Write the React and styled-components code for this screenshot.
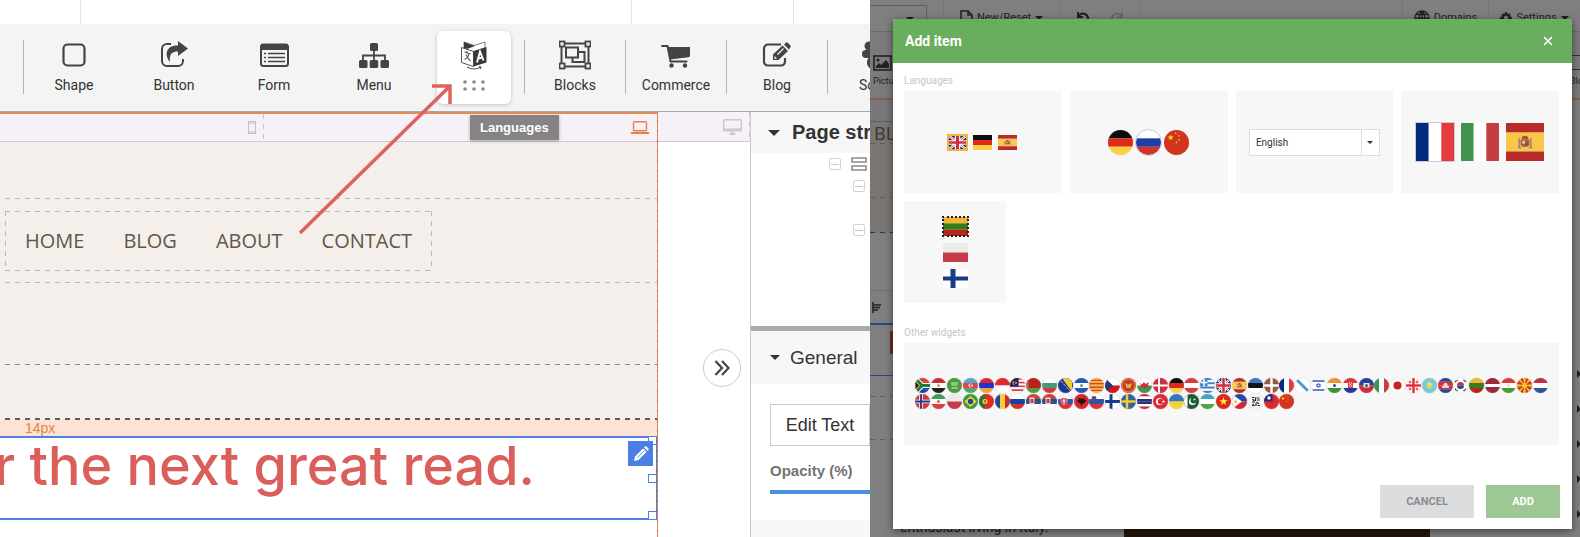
import { useState } from "react";
import styled, { createGlobalStyle, css } from "styled-components";

const GlobalStyle = createGlobalStyle`
  * {
    box-sizing: border-box;
  }
  body {
    margin: 0;
    background: #fff;
    font-family: Roboto, "Liberation Sans", sans-serif;
    color: #3c3c3c;
  }
  button, select, input {
    font-family: inherit;
    margin: 0;
  }
  svg {
    display: block;
  }
`;

//Flags, all drawn on a 30x30 field
const STAR = "M0,-5 1.2,-1.6 4.8,-1.5 1.9,.6 2.9,4 0,2 -2.9,4 -1.9,.6 -4.8,-1.5 -1.2,-1.6Z";

const Star = ({ x = 15, y = 15, s = 1, fill = "#ffde00" }) => (
  <path d={STAR} fill={fill} transform={`translate(${x} ${y}) scale(${s})`} />
);
const Dot = ({ x = 15, y = 15, r = 4, fill }) => (
  <circle cx={x} cy={y} r={r} fill={fill} />
);
const Box = ({ x = 0, y = 0, w = 30, h = 30, fill }) => (
  <rect x={x} y={y} width={w} height={h} fill={fill} />
);
const Cross = ({ x = 12, w = 5, fill }) => (
  <path d={`M${x},0V30M0,15H30`} stroke={fill} strokeWidth={w} fill="none" />
);

const union = (
  <>
    <Box fill="#012169" />
    <path d="M0,0 30,30M30,0 0,30" stroke="#fff" strokeWidth="4.6" />
    <path d="M0,0 30,30M30,0 0,30" stroke="#d22f3a" strokeWidth="1.4" />
    <Cross x={15} w={9} fill="#fff" />
    <Cross x={15} w={5} fill="#d22f3a" />
  </>
);

const FLAGS = {
  za: {
    h: ["#de3831", "#de3831", "#2240a0", "#2240a0"],
    over: (
      <>
        <path d="M0,0 14,15 0,30M14,15H30" stroke="#fff" strokeWidth="10" fill="none" />
        <path d="M0,0 14,15 0,30M14,15H30" stroke="#12803c" strokeWidth="6" fill="none" />
        <path d="M0,5 9,15 0,25Z" fill="#222" stroke="#ffb612" strokeWidth="2" />
      </>
    ),
  },
  eg: { h: ["#ce2b37", "#fff", "#222"], over: <Dot r={3} fill="#c9a03c" /> },
  sa: {
    h: ["#4d9b3b"],
    over: <path d="M8,10H22M9,14H21M9,20H22" stroke="#dcebd8" strokeWidth="2.4" />,
  },
  az: {
    h: ["#4fa8cf", "#e0444f", "#5aa56a"],
    over: (
      <>
        <Dot r={4} fill="#fff" />
        <Dot x={16} r={3} fill="#e0444f" />
        <Star x={18} s={0.5} fill="#fff" />
      </>
    ),
  },
  am: { h: ["#e0282f", "#2331d0", "#f0a23c"] },
  id: { h: ["#e0282f", "#fff"] },
  my: {
    h: ["#d9414e", "#fff", "#d9414e", "#fff", "#d9414e", "#fff", "#d9414e", "#fff"],
    over: (
      <>
        <Box w={17} h={17} fill="#1c2163" />
        <Dot x={9} y={10} r={4} fill="#ffcc00" />
        <Dot x={11} y={10} r={4} fill="#1c2163" />
        <Star x={12} y={10} s={0.6} />
      </>
    ),
  },
  by: { h: ["#b8241d", "#b8241d", "#4d9b3b"], over: <Box w={5} fill="#cf6a60" /> },
  bg: { h: ["#fff", "#4a9a7a", "#d8392f"] },
  ba: {
    h: ["#1f3592"],
    over: (
      <>
        <path d="M8,0H28V28Z" fill="#f4cb2e" />
        <path d="M3,3 27,29" stroke="#fff" strokeWidth="2" strokeDasharray="2 2" />
      </>
    ),
  },
  sv: { h: ["#2356b4", "#fff", "#2356b4"], over: <Dot r={3} fill="#6a9a7c" /> },
  ct: {
    h: ["#f3bb30", "#d8452c", "#f3bb30", "#d8452c", "#f3bb30", "#d8452c", "#f3bb30", "#d8452c", "#f3bb30"],
  },
  cz: { h: ["#fff", "#d7141a"], over: <path d="M0,0 16,15 0,30Z" fill="#1d3c7c" /> },
  me: {
    h: ["#c8372c"],
    over: (
      <>
        <circle cx="15" cy="15" r="13" fill="none" stroke="#d8a63c" strokeWidth="2" />
        <path d="M8,10 15,13 22,10 19,20H11Z" fill="#dfae3c" />
      </>
    ),
  },
  wl: {
    h: ["#fff", "#3c9a4c"],
    over: <path d="M5,10 10,13 14,8 17,12 24,8 22,14 25,20 19,18 16,22 13,18 7,22 9,16Z" fill="#c8313e" />,
  },
  dk: { h: ["#cf2e46"], over: <Cross w={4} fill="#fff" /> },
  de: { h: ["#0c0c0c", "#dd2a1b", "#fdcf42"] },
  at: { h: ["#dc3a3f", "#fff", "#dc3a3f"] },
  gr: {
    h: ["#3f82c8", "#fff", "#3f82c8", "#fff", "#3f82c8", "#fff", "#3f82c8"],
    over: (
      <>
        <Box w={15} h={17} fill="#3f82c8" />
        <path d="M8,0V17M0,9H15" stroke="#fff" strokeWidth="3" />
      </>
    ),
  },
  gb: { h: ["#012169"], over: union },
  es: {
    h: ["#b92a2b", "#f8c748", "#f8c748", "#b92a2b"],
    over: (
      <>
        <path d="M11.500,13H18.500V17.500Q15,20.500 11.500,17.500Z" fill="#b5583c" />
        <path d="M12.500,11Q15,9 17.500,11V13H12.500Z" fill="#96602c" />
        <path d="M10.400,12V19M19.600,12V19" stroke="#9b7f78" strokeWidth="1.2" />
        <path d="M9.500,19.500H12M18,19.500H20.500" stroke="#7a7f9a" strokeWidth="1" />
        <Box x={13} y={14} w={2} h={2.4} fill="#e7c9b0" />
        <Dot x={16.5} y={16.5} r={1.1} fill="#6b4a80" />
      </>
    ),
  },
  ee: { h: ["#3878c8", "#151515", "#fff"] },
  eu: {
    h: ["#cf3b3a"],
    over: (
      <>
        <path d="M0,0 30,30M30,0 0,30" stroke="#3c8c46" strokeWidth="4" />
        <Cross x={15} w={5} fill="#fff" />
      </>
    ),
  },
  fr: { v: ["#042a80", "#fff", "#e53a3f"] },
  gl: { h: ["#fff"], over: <path d="M3,3 27,27" stroke="#46a0cc" strokeWidth="6" /> },
  il: {
    h: ["#fff"],
    over: (
      <>
        <path d="M0,6H30M0,24H30" stroke="#3455c8" strokeWidth="3" />
        <path d="M15,10 19,17H11ZM15,20 11,13H19Z" fill="none" stroke="#3455c8" strokeWidth="1.4" />
      </>
    ),
  },
  in: { h: ["#ef9234", "#fff", "#3d9438"], over: <Dot r={3} fill="#38489c" /> },
  hr: {
    h: ["#e0363a", "#fff", "#22399b"],
    over: (
      <>
        <Box x={10} y={8} w={10} h={12} fill="#e0464a" />
        <path d="M12,9H14V11H12ZM16,9H18V11H16ZM14,12H16V14H14ZM12,15H14V17H12ZM16,15H18V17H16Z" fill="#fff" />
      </>
    ),
  },
  ht: {
    h: ["#24409c", "#cf2a3e"],
    over: (
      <>
        <Box x={9} y={10} w={12} h={9} fill="#e6e6e6" />
        <Dot r={3} fill="#3f6b58" />
      </>
    ),
  },
  it: { v: ["#43924e", "#fff", "#c33d41"] },
  jp: { h: ["#fff"], over: <Dot r={8} fill="#cf2020" /> },
  ge: {
    h: ["#fff"],
    over: (
      <>
        <Cross x={15} w={5} fill="#e0343a" />
        <path d="M8,5V11M5,8H11M22,5V11M19,8H25M8,19V25M5,22H11M22,19V25M19,22H25" stroke="#e0343a" strokeWidth="2" />
      </>
    ),
  },
  kz: {
    h: ["#76cbd8"],
    over: (
      <>
        <Dot y={13} r={5} fill="#f2df4c" />
        <path d="M7,17Q15,26 23,17Q15,21 7,17Z" fill="#f2df4c" />
      </>
    ),
  },
  kh: {
    h: ["#2c4496", "#d0323c", "#d0323c", "#2c4496"],
    over: <path d="M8,20V16H11V12L15,9 19,12V16H22V20Z" fill="#e6d6dc" />,
  },
  kr: {
    h: ["#fff"],
    over: (
      <>
        <path d="M8,15A7,7 0 0 1 22,15Z" fill="#cc2c3a" />
        <path d="M8,15A7,7 0 0 0 22,15Z" fill="#1f4a8c" />
        <path d="M4,8 9,4M21,4 26,8M4,22 9,26M21,26 26,22" stroke="#333" strokeWidth="3" strokeDasharray="3 1" />
      </>
    ),
  },
  lt: { h: ["#f2b632", "#397a1f", "#b4271c"] },
  lv: { h: ["#9c2b38", "#9c2b38", "#fff", "#9c2b38", "#9c2b38"] },
  tj: { h: ["#dc3a3a", "#fff", "#4a9a3a"], over: <Dot r={2} fill="#e8b53c" /> },
  mk: {
    h: ["#d23a22"],
    over: (
      <>
        <path d="M15,15 12,0H18ZM15,15 12,30H18ZM15,15 0,12V18ZM15,15 30,12V18ZM15,15 2,4 6,1ZM15,15 28,4 24,1ZM15,15 2,26 6,29ZM15,15 28,26 24,29Z" fill="#f4c832" />
        <Dot r={5} fill="#f4c832" />
      </>
    ),
  },
  nl: { h: ["#c02f3c", "#fff", "#2c55a4"] },
  no: {
    h: ["#d03a3e"],
    over: (
      <>
        <Cross w={7} fill="#fff" />
        <Cross w={3.6} fill="#1f3474" />
      </>
    ),
  },
  ir: { h: ["#3f9b5e", "#fff", "#d8403c"], over: <Dot r={3} fill="#d8605c" /> },
  pl: { h: ["#ebebea", "#c93a48"] },
  br: {
    h: ["#3c9a44"],
    over: (
      <>
        <path d="M15,4 27,15 15,26 3,15Z" fill="#f4d62c" />
        <Dot r={5.4} fill="#27449a" />
      </>
    ),
  },
  pt: {
    h: ["#e02d22"],
    over: (
      <>
        <Box w={12} fill="#23793a" />
        <Dot x={12} r={5} fill="#f2cf2c" />
        <Box x={10} y={12} w={4} h={5} fill="#d8504a" />
      </>
    ),
  },
  ro: { v: ["#26479e", "#f6d232", "#cd2c38"] },
  ru: { h: ["#fff", "#1b3ea8", "#cf3427"] },
  rs: {
    h: ["#c8433f", "#2d4d86", "#fff"],
    over: (
      <>
        <Box x={7} y={7} w={10} h={14} fill="#e9d9d6" />
        <Box x={9} y={10} w={6} h={8} fill="#c8433f" />
      </>
    ),
  },
  sk: {
    h: ["#f4f4f4", "#2a55a8", "#dc3136"],
    over: (
      <>
        <path d="M6,8H18V17Q12,25 6,17Z" fill="#dc3136" stroke="#fff" />
        <path d="M12,10V19M9,14H15" stroke="#fff" strokeWidth="2" />
      </>
    ),
  },
  al: {
    h: ["#d8282c"],
    over: <path d="M9,7 14,10 15,8 16,10 21,7 20,12 25,11 21,18 17,19 15,25 13,19 9,18 5,11 10,12Z" fill="#2a1212" />,
  },
  si: {
    h: ["#fff", "#2a55a8", "#dc3136"],
    over: <path d="M6,5H14V11Q10,17 6,11Z" fill="#2a55a8" stroke="#dc3136" />,
  },
  fi: { h: ["#fff"], over: <Cross w={6} fill="#183c8a" /> },
  se: { h: ["#2d65a0"], over: <Cross w={5} fill="#f3c92d" /> },
  th: { h: ["#cc2c42", "#fff", "#2a2f78", "#2a2f78", "#fff", "#cc2c42"] },
  tr: {
    h: ["#dc2a36"],
    over: (
      <>
        <Dot x={13} r={7} fill="#fff" />
        <Dot x={15} r={5.4} fill="#dc2a36" />
        <Star x={21} s={0.7} fill="#fff" />
      </>
    ),
  },
  ua: { h: ["#3376c4", "#f4d232"] },
  pk: {
    h: ["#1f5c32"],
    over: (
      <>
        <Box w={7} fill="#fff" />
        <Dot x={17} r={7} fill="#fff" />
        <Dot x={19} y={13} r={6} fill="#1f5c32" />
        <Star x={21} y={11} s={0.6} fill="#fff" />
      </>
    ),
  },
  uz: { h: ["#3fa6c0", "#fff", "#4ca648"] },
  vn: { h: ["#dc2a22"], over: <Star s={1.8} fill="#ffe43c" /> },
  ph: {
    h: ["#2648a4", "#cc2a38"],
    over: (
      <>
        <path d="M0,0 20,15 0,30Z" fill="#fff" />
        <Dot x={7} r={3} fill="#f2c62c" />
      </>
    ),
  },
  km: {
    h: ["#f6f6f6"],
    over: (
      <path
        d="M8,7H13M17,8H23M9,10 13,14M15,7V14M18,12H24M8,16H14M17,16 22,20M9,20 13,24M16,18V24M19,23H24M8,23H10"
        stroke="#2a2a2a"
        strokeWidth="2.4"
      />
    ),
  },
  tw: {
    h: ["#de2a24"],
    over: (
      <>
        <Box w={17} h={15} fill="#1c2c90" />
        <Dot x={10} y={8} r={3.4} fill="#fff" />
      </>
    ),
  },
  cn: {
    h: ["#d23420"],
    over: (
      <>
        <Star x={8} y={9} s={0.8} />
        <Star x={14} y={4} s={0.3} />
        <Star x={18} y={7} s={0.3} />
        <Star x={18} y={12} s={0.3} />
        <Star x={15} y={15} s={0.3} />
      </>
    ),
  },
};

const ROUND_ROWS =
  "za eg sa az am id my by bg ba sv ct cz me wl dk de at gr gb es ee eu fr gl il in hr ht it jp ge kz kh kr lt lv tj mk nl " +
  "no ir pl br pt ro ru rs rs sk al si fi se th tr ua pk uz vn ph km tw cn";

const Flag = ({ code, ...rest }) => {
  const { h, v, over } = FLAGS[code];
  const stripes = h || v;
  const size = 30 / stripes.length;
  return (
    <FlagSvg viewBox="0 0 30 30" preserveAspectRatio="none" aria-hidden="true" {...rest}>
      {stripes.map((fill, i) =>
        h ? (
          <rect key={i} y={i * size} width="30" height={size + 0.1} fill={fill} />
        ) : (
          <rect key={i} x={i * size} width={size + 0.1} height="30" fill={fill} />
        )
      )}
      {over}
    </FlagSvg>
  );
};

//Toolbar icons, 32x32
const icons = {
  shape: <rect x="5.5" y="5.5" width="21" height="21" rx="4" fill="none" stroke="#444" strokeWidth="2.2" />,
  button: (
    <>
      <path d="M13,5H9A5,5 0 0 0 4,10V22A5,5 0 0 0 9,27H20A5,5 0 0 0 25,22V20" fill="none" stroke="#444" strokeWidth="2" />
      <path d="M20,2 30,9.500 20,17V12.500C14,12.500 11,15 12,23C6,16 8,6 20,6.500Z" fill="#444" />
    </>
  ),
  form: (
    <>
      <rect x="3" y="5.500" width="27" height="21.500" rx="2.500" fill="none" stroke="#444" strokeWidth="2" />
      <path d="M3,5H30V11H3Z" fill="#444" />
      <path d="M10,14.500H27M10,18.500H27M10,22.500H27" stroke="#444" strokeWidth="1.600" />
      <path d="M6,14.500H8M6,18.500H8M6,22.500H8" stroke="#444" strokeWidth="1.600" />
    </>
  ),
  menu: (
    <>
      <rect x="12" y="4" width="8" height="8" rx="1.500" fill="#444" />
      <rect x="1" y="21" width="8.500" height="8" rx="1.500" fill="#444" />
      <rect x="11.700" y="21" width="8.500" height="8" rx="1.500" fill="#444" />
      <rect x="22.500" y="21" width="8.500" height="8" rx="1.500" fill="#444" />
      <path d="M16,12V21M5,21V16.500H27V21" fill="none" stroke="#444" strokeWidth="1.800" />
    </>
  ),
  languages: (
    <>
      <path d="M6,3 16,6.500 27,3V9L15,13 6,9Z" fill="#fff" stroke="#555" strokeWidth=".8" />
      <path d="M6,3 17,7 9,10 6,9Z" fill="#3a3a3a" />
      <path d="M3.500,8.500 15.500,12.500V27.500L3.500,23.500Z" fill="#fff" stroke="#555" />
      <path d="M15.500,12 28.500,8V23.500L15.500,27.500Z" fill="#3a3a3a" />
      <path d="M19,23.500 22,12.500 25.500,21.500M20,19.500 24.500,18.500" fill="none" stroke="#fff" strokeWidth="1.900" />
      <path d="M6.500,13 12.500,15M11,14.500Q10,19 6.500,20.500M8,15.500Q10,20 12.500,22M9,12V14" fill="none" stroke="#555" strokeWidth="1.100" />
      <path d="M9,28Q16,32 23,28M23,28 21,27.500M23,28 22.500,30" fill="none" stroke="#555" strokeWidth="1.100" />
    </>
  ),
  blocks: (
    <>
      <rect x="2.500" y="4.500" width="27" height="23" fill="none" stroke="#444" strokeWidth="2" />
      <rect x="13.500" y="13" width="12" height="10" fill="#f4f4f4" stroke="#444" strokeWidth="2" />
      <rect x="7" y="8.500" width="12" height="10" fill="#f4f4f4" stroke="#444" strokeWidth="2" />
      {[[0.500, 2.500], [26.500, 2.500], [0.500, 24.500], [26.500, 24.500]].map(([x, y]) => (
        <rect key={x + "-" + y} x={x} y={y} width="5" height="5" fill="#f4f4f4" stroke="#444" strokeWidth="1.800" />
      ))}
    </>
  ),
  commerce: (
    <>
      <path d="M2,7H7.500L10.500,22.500H26.500" fill="none" stroke="#444" strokeWidth="2" strokeLinecap="round" />
      <path d="M8,8H30V16.500Q30,18 28.500,18.300L10,20.500Z" fill="#444" />
      <circle cx="11.500" cy="26.500" r="2.200" fill="#444" />
      <circle cx="25" cy="26.500" r="2.200" fill="#444" />
    </>
  ),
  blog: (
    <>
      <path d="M20,5.500H7A4,4 0 0 0 3,9.500V22A4,4 0 0 0 7,26.500H20A4,4 0 0 0 24,22V19" fill="none" stroke="#444" strokeWidth="2.200" />
      <path d="M12,21V15.500L21.500,6.500 27,12 17.500,21Z" fill="#444" />
      <path d="M23,5.500 25,3.500Q26,3 27,4L29.500,6.500Q30,7.500 29.300,8.500L28,10.500Z" fill="#444" />
      <path d="M13.500,17 16,19.500 13.500,20Z" fill="#f4f4f4" />
      <path d="M16.500,15.500 22.500,9.500" stroke="#f4f4f4" strokeWidth="1.200" />
    </>
  ),
  social: (
    <g fill="#444">
      <circle cx="7" cy="7" r="4.500" />
      <rect x="0" y="11" width="11" height="8" rx="4" />
      <circle cx="17" cy="11" r="6" />
      <rect x="5" y="17" width="24" height="13" rx="6" />
    </g>
  ),
};

const TOOLS = [
  ["shape", "Shape"],
  ["button", "Button"],
  ["form", "Form"],
  ["menu", "Menu"],
  ["languages", "Languages"],
  ["blocks", "Blocks"],
  ["commerce", "Commerce"],
  ["blog", "Blog"],
  ["social", "Social"],
];
const DIVIDED = ["shape", "blocks", "commerce", "blog", "social"];

const Tool = ({ id, label }) => {
  const active = id === "languages";
  return (
    <ToolSlot $divided={DIVIDED.includes(id)}>
      <ToolButton type="button" $active={active} aria-label={label}>
        <svg width="32" height="32" viewBox="0 0 32 32">
          {icons[id]}
        </svg>
        {active ? (
          <Grip width="22" height="14" viewBox="0 0 22 14">
            {[2, 11, 20].map((x) =>
              [3, 10].map((y) => <circle key={x + "-" + y} cx={x} cy={y} r="1.800" fill="#8a8a8a" />)
            )}
          </Grip>
        ) : (
          <ToolLabel>{label}</ToolLabel>
        )}
      </ToolButton>
      {active && <Tooltip>{label}</Tooltip>}
    </ToolSlot>
  );
};

const Editor = () => (
  <EditorPane>
    <TabStrip>
      <TabCell $grow={80} />
      <TabCell $grow={552} />
      <TabCell $grow={162} />
      <TabCell $grow={76} $last />
    </TabStrip>
    <Toolbar>
      {TOOLS.map(([id, label]) => (
        <Tool key={id} id={id} label={label} />
      ))}
    </Toolbar>
    <Workspace>
      <Canvas>
        <Ruler $active>
          <PhoneMark>
            <svg width="8" height="13" viewBox="0 0 8 13">
              <rect x=".5" y=".5" width="7" height="12" fill="none" stroke="#c4c0c4" />
              <path d="M0,2H8M0,11H8" stroke="#c4c0c4" />
            </svg>
          </PhoneMark>
          <svg width="18" height="13" viewBox="0 0 18 13">
            <rect x="2.500" y=".7" width="13" height="9" rx="1" fill="none" stroke="#e8814d" strokeWidth="1.400" />
            <path d="M0,12H18" stroke="#e8814d" strokeWidth="2" />
          </svg>
        </Ruler>
        <Band $height={57} />
        <NavBand>
          <SiteNav>
            <a href="#home">HOME</a>
            <a href="#blog">BLOG</a>
            <a href="#about">ABOUT</a>
            <a href="#contact">CONTACT</a>
          </SiteNav>
        </NavBand>
        <Band $height={82} $color="#8f8b87" />
        <Band $height={55} $color="#5f5b58" $thick />
        <Spacing>14px</Spacing>
        <Selection>
          <Headline>for the next great read.</Headline>
          <EditBadge type="button" aria-label="Edit">
            <svg width="16" height="16" viewBox="0 0 16 16">
              <path d="M1,15 2,10.500 10,2.500 13.500,6 5.500,14Z" fill="#fff" />
              <path d="M11,1.500 12,.5Q13,0 14,1L15,2Q16,3 15.500,4L14.500,5Z" fill="#fff" />
              <path d="M4.500,11.500 11,5" stroke="#4a80e4" strokeWidth=".8" />
            </svg>
          </EditBadge>
          <Handle $at="0%" />
          <Handle $at="50%" />
          <Handle $at="100%" />
        </Selection>
      </Canvas>
      <CanvasEdge />
      <Gutter>
        <Ruler $dashed>
          <svg width="19" height="16" viewBox="0 0 19 16">
            <rect x=".7" y=".7" width="17.600" height="11" rx="1" fill="none" stroke="#cbc8cb" strokeWidth="1.400" />
            <path d="M1,10.500H18M9.500,11V15M6.500,15H12.500" stroke="#cbc8cb" strokeWidth="2" />
          </svg>
        </Ruler>
        <Collapse type="button" aria-label="Collapse panel">
          <svg width="16" height="16" viewBox="0 0 16 16">
            <path d="M1.500,1 8,8 1.500,15M8,1 14.500,8 8,15" fill="none" stroke="#444" strokeWidth="2.200" />
          </svg>
        </Collapse>
      </Gutter>
      <Sidebar>
        <PanelHead $bold>
          <Caret $size={6} />
          <span>Page structure</span>
        </PanelHead>
        <Tree>
          <TreeRow $indent={78}>
            <Toggle />
            <svg width="16" height="14" viewBox="0 0 16 14">
              <path d="M1,1H15V5H1ZM1,9H15V13H1Z" fill="none" stroke="#8a8a8a" strokeWidth="1.600" />
            </svg>
          </TreeRow>
          <TreeRow $indent={102}>
            <Toggle />
          </TreeRow>
          <TreeRow $indent={102} />
          <TreeRow $indent={102}>
            <Toggle />
          </TreeRow>
        </Tree>
        <PanelHead $tall>
          <Caret $size={5} />
          <span>General</span>
        </PanelHead>
        <Properties>
          <EditText type="button">Edit Text</EditText>
          <label htmlFor="opacity">Opacity (%)</label>
          <Range id="opacity" type="range" defaultValue="100" />
        </Properties>
        <SidebarFoot />
      </Sidebar>
    </Workspace>
    <Arrow width="170" height="160" viewBox="0 0 170 160">
      <path d="M10,153 159,7M142,6H160V24" fill="none" stroke="#de625e" strokeWidth="3.500" />
    </Arrow>
  </EditorPane>
);

//The dimmed editor that sits behind the dialog
const Backdrop = () => (
  <Dimmed>
    <DimTop>
      <DimSelect>
        <Caret $size={4} $dark />
      </DimSelect>
      <DimItem $width={116}>
        <svg width="13" height="16" viewBox="0 0 13 16">
          <path d="M1,1H8L12,5V15H1ZM8,1V5H12" fill="none" stroke="#222" strokeWidth="1.600" />
        </svg>
        New/Reset
        <Caret $size={4} $dark />
      </DimItem>
      <DimItem $width={81} $gap={20}>
        <svg width="14" height="14" viewBox="0 0 14 14">
          <path d="M2,1V6H7M2,6Q5,1 9,3Q13,5 12,10" fill="none" stroke="#222" strokeWidth="2" />
        </svg>
        <svg width="14" height="14" viewBox="0 0 14 14">
          <path d="M12,1V6H7M12,6Q9,1 5,3Q1,5 2,10" fill="none" stroke="#666" strokeWidth="1.600" />
        </svg>
      </DimItem>
      <DimSpring />
      <DimItem $width={86}>
        <svg width="16" height="16" viewBox="0 0 16 16">
          <path d="M8,1A7,7 0 1 0 8,15A7,7 0 1 0 8,1V15M1,8H15M8,1Q2,8 8,15Q14,8 8,1M2.500,4.500H13.500" fill="none" stroke="#222" strokeWidth="1.300" />
        </svg>
        Domains
      </DimItem>
      <DimItem $width={92}>
        <svg width="12" height="12" viewBox="0 0 12 12">
          <circle cx="6" cy="6" r="3.500" fill="none" stroke="#222" strokeWidth="2.600" />
          <path d="M6,0V12M0,6H12M2,2 10,10M10,2 2,10" stroke="#222" strokeWidth="1.800" strokeDasharray="2 8" />
        </svg>
        Settings
        <Caret $size={4} $dark />
      </DimItem>
    </DimTop>
    <DimTools>
      <DimPicture>
        <svg width="19" height="16" viewBox="0 0 19 16">
          <rect x="1" y="1" width="17" height="14" fill="none" stroke="#222" strokeWidth="1.600" />
          <path d="M3,13 3,11 6,8 8,10 13,5 16,9V13Z" fill="#222" />
          <circle cx="5" cy="5" r="1.600" fill="#222" />
        </svg>
        Picture
      </DimPicture>
      <DimBlog>
        <DimFrame />
        Blog
      </DimBlog>
    </DimTools>
    <DimBody>
      <DimCanvas>
        <DimRuler />
        <DimBand $height={22}>BLOG</DimBand>
        <DimBand $height={54} />
        <DimBand $height={35} $strong />
        <DimText>
          <svg width="9" height="11" viewBox="0 0 9 11">
            <path d="M1,0V11M2,3H9M2,5.500H8M2,8H6" stroke="#222" strokeWidth="1.600" />
          </svg>
        </DimText>
        <DimSelected>
          <DimLetter />
        </DimSelected>
        <DimRule />
        <DimRule $gap={43} />
        <DimFoot>
          <span>enthusiast living in Italy.</span>
          <DimPhoto />
        </DimFoot>
      </DimCanvas>
      <DimRail>
        {[0, 1, 2, 3, 4].map((n) => (
          <Marker key={n} />
        ))}
      </DimRail>
    </DimBody>
  </Dimmed>
);

const Dialog = () => {
  const [language, setLanguage] = useState("English");

  return (
    <DialogBox role="dialog" aria-label="Add item">
      <DialogHead>
        <h2>Add item</h2>
        <Close type="button" aria-label="Close">
          <svg width="10" height="10" viewBox="0 0 10 10">
            <path d="M1,1 9,9M9,1 1,9" stroke="#fff" strokeWidth="1.600" />
          </svg>
        </Close>
      </DialogHead>
      <DialogBody>
        <GroupTitle>Languages</GroupTitle>
        <Tiles>
          <Tile type="button" $gap={6} aria-label="Small flags">
            <Flag code="gb" $w={19} $h={15} $mark="amber" />
            <Flag code="de" $w={19} $h={15} />
            <Flag code="es" $w={19} $h={15} />
          </Tile>
          <Tile type="button" $gap={3} aria-label="Round flags">
            <Flag code="de" $w={25} $h={25} $round />
            <Flag code="ru" $w={25} $h={25} $round $mark="grey" />
            <Flag code="cn" $w={25} $h={25} $round />
          </Tile>
          <Tile as="div">
            <SelectWrap>
              <select
                aria-label="Language"
                value={language}
                onChange={(e) => setLanguage(e.target.value)}
              >
                <option>English</option>
                <option>Deutsch</option>
              </select>
              <SelectArrow>
                <Caret $size={3} />
              </SelectArrow>
            </SelectWrap>
          </Tile>
          <Tile type="button" $gap={7} aria-label="Large flags">
            <Flag code="fr" $w={38} $h={38} $mark="grey" />
            <Flag code="it" $w={38} $h={38} />
            <Flag code="es" $w={38} $h={38} />
          </Tile>
          <Tile type="button" $gap={7} $column aria-label="Vertical flags">
            <Flag code="lt" $w={25} $h={19} $mark="dots" />
            <Flag code="pl" $w={25} $h={19} />
            <Flag code="fi" $w={25} $h={19} />
          </Tile>
        </Tiles>
        <GroupTitle $spaced>Other widgets</GroupTitle>
        <WideTile type="button" aria-label="All flags">
          {ROUND_ROWS.split(" ").map((code, i) => (
            <Flag key={i} code={code} $w={15} $h={15} $round />
          ))}
        </WideTile>
      </DialogBody>
      <DialogFoot>
        <Cancel type="button">CANCEL</Cancel>
        <Add type="button">ADD</Add>
      </DialogFoot>
    </DialogBox>
  );
};

const App = () => (
  <Page>
    <GlobalStyle />
    <Editor />
    <Preview>
      <Backdrop />
      <Dialog />
    </Preview>
  </Page>
);

const dashX = (color) => css`repeating-linear-gradient(90deg, ${color} 0 5px, transparent 5px 10px)`;
const dashY = (color) => css`repeating-linear-gradient(180deg, ${color} 0 5px, transparent 5px 10px)`;

const Page = styled.div`
  display: grid;
  grid-template-columns: minmax(0, 870fr) minmax(0, 710fr);
  min-height: 100vh;
`;

const EditorPane = styled.main`
  position: relative;
  display: flex;
  flex-direction: column;
  overflow: hidden;
`;

const TabStrip = styled.div`
  display: flex;
  height: 24px;
`;

const TabCell = styled.div`
  flex: ${(p) => p.$grow} 0 0;
  border-right: ${(p) => (p.$last ? "none" : "1px solid #e4e4e4")};
`;

const Toolbar = styled.div`
  display: flex;
  height: 88px;
  padding: 7px 0 0 23px;
  background: #f4f4f4;
  border-bottom: 1px solid #a9a9a9;
`;

const ToolSlot = styled.div`
  position: relative;
  display: flex;
  flex: none;
  justify-content: center;
  align-items: flex-start;
  min-width: 100px;
  ${(p) =>
    p.$divided &&
    css`
      &::before {
        content: "";
        width: 1px;
        height: 54px;
        margin: 9px 13px 0 0;
        background: #b4b4b4;
      }
      min-width: 101px;
      justify-content: flex-start;
    `}
`;

const ToolButton = styled.button`
  display: flex;
  flex-direction: column;
  align-items: center;
  width: 74px;
  height: 73px;
  padding: 8px 0 0;
  border: none;
  border-radius: 6px;
  background: ${(p) => (p.$active ? "#fff" : "none")};
  box-shadow: ${(p) => (p.$active ? "0 1px 4px rgba(0, 0, 0, 0.2)" : "none")};
  cursor: pointer;
`;

const ToolLabel = styled.span`
  margin-top: 5px;
  font-size: 14px;
  line-height: 18px;
  color: #333;
`;

const Grip = styled.svg`
  margin-top: 8px;
`;

const Tooltip = styled.div`
  position: absolute;
  z-index: 2;
  top: 84px;
  left: 46px;
  padding: 0 10px;
  font-family: "Liberation Sans", Arial, sans-serif;
  font-size: 13px;
  font-weight: 700;
  line-height: 25px;
  color: #fff;
  background: #868387;
  box-shadow: 0 1px 3px rgba(0, 0, 0, 0.3);
`;

const Workspace = styled.div`
  display: flex;
  flex: 1;
`;

const Canvas = styled.section`
  display: flex;
  flex: 1;
  flex-direction: column;
  min-width: 0;
`;

const Ruler = styled.div`
  display: flex;
  align-items: center;
  justify-content: flex-end;
  height: 30px;
  padding-right: 8px;
  background: ${(p) => (p.$dashed ? css`${dashY("#c8c4c8")} right / 1px 100% no-repeat,` : "")} #f6f1f7;
  border-top: ${(p) => (p.$active ? "2px solid #e8895c" : "none")};
  border-bottom: 1px solid #cfcbcf;
`;

const PhoneMark = styled.div`
  display: flex;
  align-items: center;
  justify-content: flex-end;
  width: 264px;
  height: 100%;
  margin-right: auto;
  padding-right: 8px;
  background: ${dashY("#c8c4c8")} right / 1px 100% no-repeat;
`;

const Band = styled.div`
  height: ${(p) => p.$height}px;
  background: ${(p) => dashX(p.$color || "#bcb7b2")} 5px 100% / 100% ${(p) => (p.$thick ? 2 : 1)}px no-repeat, #f4efeb;
`;

const NavBand = styled.div`
  padding: 12px 5px;
  background: ${dashX("#bcb7b2")} 5px 100% / 100% 1px no-repeat, #f4efeb;
`;

const SiteNav = styled.nav`
  display: flex;
  gap: 39px;
  width: fit-content;
  padding: 0 20px;
  line-height: 60px;
  background: ${dashX("#bcb7b2")} top / 100% 1px no-repeat,
    ${dashX("#bcb7b2")} bottom / 100% 1px no-repeat,
    ${dashY("#bcb7b2")} left / 1px 100% no-repeat,
    ${dashY("#bcb7b2")} right / 1px 100% no-repeat;

  a {
    font-family: "Open Sans", "Noto Sans", sans-serif;
    font-size: 20px;
    color: #5f5748;
    text-decoration: none;
  }
`;

const Spacing = styled.div`
  height: 16px;
  padding-left: 25px;
  font-family: "Liberation Sans", Arial, sans-serif;
  font-size: 14px;
  line-height: 17px;
  color: #ea8240;
  background: #fce3d6;
`;

const Selection = styled.div`
  position: relative;
  border: solid #4f80dc;
  border-width: 2px 1px 2px 0;
  height: 84px;
`;

const Headline = styled.h1`
  display: flex;
  justify-content: flex-end;
  margin: 0;
  padding-right: 121px;
  font-family: Inter, sans-serif;
  font-size: 54px;
  font-weight: 500;
  line-height: 56px;
  white-space: nowrap;
  color: #da5f5b;
`;

const EditBadge = styled.button`
  position: absolute;
  z-index: 1;
  top: 3px;
  right: 3px;
  display: grid;
  place-items: center;
  width: 25px;
  height: 25px;
  padding: 0;
  border: none;
  background: #4a80e4;
`;

const Handle = styled.span`
  position: absolute;
  top: ${(p) => p.$at};
  right: -1px;
  width: 9px;
  height: 9px;
  margin-top: ${(p) => (p.$at === "0%" ? -2 : p.$at === "50%" ? -4 : -7)}px;
  background: #fff;
  border: 1px solid #4f80dc;
`;

const CanvasEdge = styled.div`
  width: 1px;
  background: repeating-linear-gradient(180deg, #e8814d 0 8px, #8e7566 8px 10px);
`;

const Gutter = styled.div`
  width: 92px;
`;

const Collapse = styled.button`
  display: grid;
  place-items: center;
  width: 38px;
  height: 38px;
  margin: 207px 9px 0 auto;
  padding: 0;
  border: 1px solid #ccc;
  border-radius: 50%;
  background: #fff;
`;

const Sidebar = styled.aside`
  display: flex;
  flex-direction: column;
  width: 120px;
  overflow: hidden;
  border-left: 1px solid #c9c9c9;
  font-family: "Liberation Sans", Arial, sans-serif;
`;

const PanelHead = styled.div`
  display: flex;
  flex: none;
  align-items: center;
  gap: ${(p) => (p.$bold ? 12 : 10)}px;
  height: ${(p) => (p.$tall ? 58 : 41)}px;
  padding-left: ${(p) => (p.$bold ? 17 : 19)}px;
  border-top: ${(p) => (p.$tall ? "5px solid #ababab" : "none")};
  font-size: ${(p) => (p.$bold ? 20 : 19)}px;
  font-weight: ${(p) => (p.$bold ? 700 : 400)};
  white-space: nowrap;
  color: #333;
  background: #f7f7f7;

  span:last-child {
    min-width: 0;
    overflow: hidden;
  }
`;

const Caret = styled.span`
  flex: none;
  border: ${(p) => p.$size}px solid transparent;
  border-top-color: ${(p) => (p.$dark ? "#1c1c1c" : "#333")};
  border-bottom: none;
`;

const Tree = styled.div`
  height: 173px;
`;

const TreeRow = styled.div`
  display: flex;
  align-items: center;
  gap: 10px;
  height: 22px;
  padding-left: ${(p) => p.$indent}px;
`;

const Toggle = styled.span`
  display: flex;
  flex: none;
  align-items: center;
  width: 12px;
  height: 12px;
  border: 1px solid #d4d4d4;
  border-radius: 2px;

  &::before {
    content: "";
    flex: 1;
    height: 1px;
    margin: 0 1px;
    background: #c8c8c8;
  }
`;

const Properties = styled.div`
  display: flex;
  flex: none;
  flex-direction: column;
  align-items: flex-start;
  padding: 20px 0 26px 19px;

  label {
    margin-top: 16px;
    font-size: 15px;
    font-weight: 700;
    line-height: 18px;
    white-space: nowrap;
    color: #737373;
  }
`;

const EditText = styled.button`
  width: 100%;
  height: 42px;
  padding: 0;
  border: 1px solid #ccc;
  background: #fff;
  font-size: 18px;
  color: #333;
`;

const Range = styled.input`
  appearance: none;
  width: 260px;
  height: 4px;
  margin-top: 10px;
  background: #4a90dc;

  &::-webkit-slider-thumb {
    appearance: none;
    width: 10px;
    height: 10px;
    background: #4a90dc;
  }
`;

const SidebarFoot = styled.div`
  flex: 1;
  background: #f7f7f7;
`;

const Arrow = styled.svg`
  position: absolute;
  z-index: 1;
  top: 80px;
  left: 290px;
  pointer-events: none;
`;

const Preview = styled.section`
  position: relative;
  display: flex;
  overflow: hidden;
`;

const Dimmed = styled.div`
  display: flex;
  flex: 1;
  flex-direction: column;
  min-width: 0;
  background: #7f7f7f;
  color: #222;
`;

const DimTop = styled.div`
  display: flex;
  height: 32px;
  border-bottom: 1px solid #6c6c6c;
`;

const DimSelect = styled.div`
  display: flex;
  justify-content: flex-end;
  align-items: center;
  width: 57px;
  height: 27px;
  margin: 5px 16px 0 0;
  padding: 0 12px 0 0;
  border: solid #5e5e5e;
  border-width: 1px 1px 0 0;
`;

const DimItem = styled.div`
  display: flex;
  flex: none;
  align-items: center;
  justify-content: center;
  gap: ${(p) => p.$gap || 4}px;
  width: ${(p) => p.$width}px;
  padding-top: 4px;
  border-left: 1px solid #777;
  font-size: 11px;
`;

const DimSpring = styled.div`
  flex: 1;
  border-left: 1px solid #777;
`;

const DimTools = styled.div`
  display: flex;
  justify-content: space-between;
  height: 68px;
  padding: 23px 0 0 3px;
  background: #7b7b7b;
  border-bottom: 2px solid #8a5d48;
  font-size: 9px;
`;

const DimPicture = styled.div`
  display: flex;
  flex-direction: column;
  gap: 5px;
`;

const DimBlog = styled.div`
  width: 10px;
  overflow: hidden;
`;

const DimFrame = styled.div`
  height: 15px;
  margin-bottom: 6px;
  border: solid #333;
  border-width: 1px 0;
`;

const DimBody = styled.div`
  display: flex;
  flex: 1;
`;

const DimCanvas = styled.div`
  display: flex;
  flex: 1;
  flex-direction: column;
  min-width: 0;
`;

const DimRuler = styled.div`
  height: 22px;
  background: #7a777a;
  border-bottom: 1px solid #605c60;
`;

const DimBand = styled.div`
  height: ${(p) => p.$height}px;
  padding-left: 4px;
  font-family: "Open Sans", sans-serif;
  font-size: 18px;
  line-height: 22px;
  color: #3a3632;
  background: ${(p) => dashX(p.$strong ? "#383838" : "#5f5c59")} 0 100% / 100% 1px no-repeat, #7a7673;
`;

const DimText = styled.div`
  height: 33px;
  margin-top: 57px;
  padding: 11px 0 0 2px;
  border-top: 1px solid #707070;
`;

const DimSelected = styled.div`
  height: 53px;
  padding: 6px 0 0 20px;
  border: solid #284a84;
  border-width: 2px 0 1px;
`;

const DimLetter = styled.div`
  width: 3px;
  height: 23px;
  background: #6e2a2a;
`;

const DimRule = styled.div`
  height: ${(p) => p.$gap || 21}px;
  background: ${dashX("#5f5f5f")} 0 100% / 100% 1px no-repeat;
`;

const DimFoot = styled.div`
  display: flex;
  align-items: flex-end;
  flex: 1;
  padding-left: 30px;
  line-height: 20px;

  span {
    width: 224px;
    font-size: 14px;
  }
`;

const DimPhoto = styled.div`
  width: 306px;
  height: 40px;
  background: #24150d;
`;

const DimRail = styled.div`
  display: flex;
  flex-direction: column;
  gap: 27px;
  width: 8px;
  padding: 270px 0 0 5px;
`;

const Marker = styled.span`
  width: 0;
  border: 4px solid transparent;
  border-left-color: #1c1c1c;
  border-right: none;
`;

const DialogBox = styled.section`
  position: absolute;
  inset: 19px 8px 8px 23px;
  display: flex;
  flex-direction: column;
  background: #fff;
  box-shadow: 0 2px 8px rgba(0, 0, 0, 0.5);
`;

const DialogHead = styled.header`
  display: flex;
  flex: none;
  align-items: center;
  justify-content: space-between;
  height: 44px;
  padding: 0 12px;
  background: #69ad5e;

  h2 {
    margin: 0;
    font-size: 14px;
    font-weight: 700;
    color: #fff;
  }
`;

const Close = styled.button`
  display: grid;
  place-items: center;
  width: 24px;
  height: 24px;
  padding: 0;
  border: none;
  background: none;
`;

const DialogBody = styled.div`
  padding: 12px 13px 0 11px;
`;

const GroupTitle = styled.h3`
  margin: ${(p) => (p.$spaced ? 24 : 0)}px 0 4px;
  font-size: 10px;
  font-weight: 400;
  line-height: 12px;
  color: #c6c6c6;
`;

const Tiles = styled.div`
  display: grid;
  grid-template-columns: repeat(4, minmax(0, 1fr));
  gap: 8px;
`;

const Tile = styled.button`
  display: flex;
  flex-direction: ${(p) => (p.$column ? "column" : "row")};
  align-items: center;
  justify-content: center;
  gap: ${(p) => p.$gap}px;
  width: ${(p) => (p.$column ? "102px" : "auto")};
  height: 102px;
  padding: 0;
  border: none;
  background: #f7f7f7;
`;

const WideTile = styled.button`
  display: grid;
  grid-template-columns: repeat(40, minmax(0, 1fr));
  align-content: center;
  justify-items: center;
  row-gap: 1px;
  width: 100%;
  height: 102px;
  padding: 0 11px 2px;
  border: none;
  background: #f7f7f7;
`;

const marks = {
  amber: "2px solid #f3b33c",
  grey: "1px solid #c9cdd4",
  dots: "2px dotted #222",
};

const FlagSvg = styled.svg`
  flex: none;
  width: ${(p) => p.$w}px;
  height: ${(p) => p.$h}px;
  border-radius: ${(p) => (p.$round ? "50%" : 0)};
  outline: ${(p) => marks[p.$mark] || "none"};
  outline-offset: ${(p) => (p.$mark === "grey" ? 0 : -1)}px;
  box-shadow: ${(p) => (p.$round ? "0 0 1px rgba(0, 0, 0, 0.35)" : "none")};
`;

const SelectWrap = styled.div`
  display: flex;
  width: 131px;
  height: 27px;
  border: 1px solid #ddd;
  background: #fff;

  select {
    appearance: none;
    flex: 1;
    min-width: 0;
    padding: 0 6px;
    border: none;
    background: none;
    font-size: 10px;
    color: #333;
  }
`;

const SelectArrow = styled.span`
  display: grid;
  place-items: center;
  width: 18px;
  border-left: 1px solid #ddd;
`;

const DialogFoot = styled.footer`
  display: flex;
  justify-content: flex-end;
  gap: 12px;
  margin-top: auto;
  padding: 0 12px 11px;
`;

const FootButton = styled.button`
  height: 33px;
  padding: 0;
  border: none;
  font-size: 11px;
  font-weight: 700;
`;

const Cancel = styled(FootButton)`
  width: 94px;
  background: #dcddde;
  color: #8a8c8e;
`;

const Add = styled(FootButton)`
  width: 74px;
  background: #9dc896;
  color: #fff;
`;

export default App;
